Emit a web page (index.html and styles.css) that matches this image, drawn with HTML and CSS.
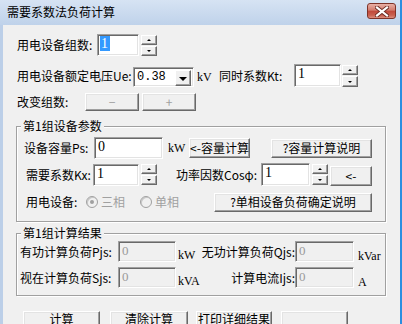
FILE: index.html
```html
<!DOCTYPE html>
<html lang="zh">
<head>
    <meta charset="UTF-8">
    <title>需要系数法负荷计算</title>
    <link rel="stylesheet" href="styles.css">
</head>
<body>
    <div class="window">
        <div class="titlebar">
            <span class="title">需要系数法负荷计算</span>
            <span class="close-btn">
                <svg width="14" height="11" viewBox="0 0 14 11">
                    <path d="M2 1.5 L12 9.5 M12 1.5 L2 9.5" stroke="#6b2a22" stroke-width="4" stroke-linecap="square"/>
                    <path d="M2 1.5 L12 9.5 M12 1.5 L2 9.5" stroke="#fff" stroke-width="2.2" stroke-linecap="square"/>
                </svg>
            </span>
        </div>

        <div class="client">
            <!-- group count -->
            <div class="row row-1">
                <span class="lbl w-groups">用电设备组数:</span>
                <span class="edit w42"><span class="picked">1</span></span>
                <span class="spin"><span class="spin-up"></span><span class="spin-down"></span></span>
            </div>

            <!-- voltage and Kt -->
            <div class="row row-2">
                <span class="lbl w-ue">用电设备额定电压Ue:</span>
                <span class="combo">
                    <span class="combo-text">0.38</span>
                    <span class="combo-btn"></span>
                </span>
                <span class="unit w-kv">kV</span>
                <span class="lbl w-kt">同时系数Kt:</span>
                <span class="edit w47 tall"><span class="val">1</span></span>
                <span class="spin spin-tall"><span class="spin-up"></span><span class="spin-down"></span></span>
            </div>

            <div class="row row-3">
                <span class="lbl w-change">改变组数:</span>
                <span class="btn btn-pm off">−</span>
                <span class="btn btn-pm off">+</span>
            </div>

            <fieldset class="group group-params">
                <legend>第1组设备参数</legend>
                <div class="row row-a">
                    <span class="lbl w-ps">设备容量Ps:</span>
                    <span class="edit w69"><span class="val">0</span></span>
                    <span class="unit w-kw">kW</span>
                    <span class="btn btn-calc">&lt;-容量计算</span>
                    <span class="btn btn-help">?容量计算说明</span>
                </div>
                <div class="row row-b">
                    <span class="lbl w-kx">需要系数Kx:</span>
                    <span class="edit w46"><span class="val">1</span></span>
                    <span class="spin"><span class="spin-up"></span><span class="spin-down"></span></span>
                    <span class="lbl w-cos">功率因数Cosφ:</span>
                    <span class="edit w49 tall"><span class="val">1</span></span>
                    <span class="spin"><span class="spin-up"></span><span class="spin-down"></span></span>
                    <span class="btn btn-arrow">&lt;-</span>
                </div>
                <div class="row row-c">
                    <span class="lbl w-dev">用电设备:</span>
                    <span class="radio on"></span><span class="radio-lbl">三相</span>
                    <span class="radio radio-2"></span><span class="radio-lbl">单相</span>
                    <span class="btn btn-single">?单相设备负荷确定说明</span>
                </div>
            </fieldset>

            <fieldset class="group group-result">
                <legend>第1组计算结果</legend>
                <div class="row row-d">
                    <span class="lbl w-res">有功计算负荷Pjs:</span>
                    <span class="edit off w58"><span class="val">0</span></span>
                    <span class="unit w-u1">kW</span>
                    <span class="lbl w-res2">无功计算负荷Qjs:</span>
                    <span class="edit off w59"><span class="val">0</span></span>
                    <span class="unit w-u2">kVar</span>
                </div>
                <div class="row row-e">
                    <span class="lbl w-res">视在计算负荷Sjs:</span>
                    <span class="edit off w58"><span class="val">0</span></span>
                    <span class="unit w-u1">kVA</span>
                    <span class="lbl w-res2">计算电流Ijs:</span>
                    <span class="edit off w59"><span class="val">0</span></span>
                    <span class="unit w-u2">A</span>
                </div>
            </fieldset>

            <div class="row row-bottom">
                <span class="btn btn-b1">计算</span>
                <span class="btn btn-b2">清除计算</span>
                <span class="btn btn-b3">打印详细结果</span>
                <span class="btn btn-b4"></span>
            </div>
        </div>
    </div>
</body>
</html>
```

FILE: styles.css
```css
body {
    margin: 0;
    width: 402px;
    height: 324px;
    overflow: hidden;
    font-family: "Noto Sans CJK SC", "Noto Sans", sans-serif;
    font-size: 12px;
    color: #000;
    background: #f0f0f0;
}
.window {
    height: 324px;
    border-left: 3px solid #bccfe8;
    border-right: 2px solid #2b8fe0;
    background: #f0f0f0;
}
.titlebar {
    height: 25px;
    margin-left: -3px;
    padding-left: 7px;
    display: flex;
    align-items: center;
    justify-content: space-between;
    background: linear-gradient(#d6e3f3, #bfd2ea);
}
.title {
    font-size: 12px;
    line-height: 14px;
    margin-top: -1px;
}
.close-btn {
    width: 29px;
    height: 16px;
    margin-right: 4px;
    margin-top: -3px;
    box-sizing: border-box;
    border: 1px solid #7e3328;
    border-radius: 3px;
    background: linear-gradient(#e8b0a6, #d27a6c 45%, #c0483a 50%, #c9604f 80%, #dc8e7f);
    display: flex;
    align-items: center;
    justify-content: center;
}
.row {
    display: flex;
    align-items: center;
}
.lbl {
    white-space: nowrap;
    line-height: 14px;
    flex: none;
}
.unit {
    font-family: "Liberation Serif", serif;
    font-size: 12px;
    flex: none;
}

/* edits */
.edit {
    box-sizing: border-box;
    height: 22px;
    flex: none;
    background: #fff;
    border: 1px solid;
    border-color: #a0a0a0 #fff #fff #a0a0a0;
    box-shadow: inset 1px 1px 0 #696969, inset -1px -1px 0 #e3e3e3;
    padding: 2px 0 0 3px;
    font-family: "Liberation Serif", serif;
    font-size: 14px;
    line-height: 14px;
}
.edit.tall {
    height: 23px;
}
.edit.off {
    background: #f0f0f0;
    height: 21px;
    color: #9a9a9a;
    font-size: 13px;
}
.picked {
    background: #3399ff;
    color: #fff;
    padding: 0 2px 0 1px;
    margin-left: -1px;
}
.w42 { width: 42px; }
.w46 { width: 46px; }
.w47 { width: 47px; }
.w49 { width: 49px; }
.w58 { width: 58px; }
.w59 { width: 59px; }
.w69 { width: 69px; }

/* spin buttons */
.spin {
    display: flex;
    flex-direction: column;
    gap: 1px;
    margin-left: 2px;
    flex: none;
}
.spin-up,
.spin-down {
    box-sizing: border-box;
    width: 16px;
    height: 10px;
    background: #f0f0f0;
    border: 1px solid;
    border-color: #fff #696969 #696969 #fff;
    box-shadow: inset -1px -1px 0 #a0a0a0;
    display: flex;
    align-items: center;
    justify-content: center;
}
.spin-up::after,
.spin-down::after {
    content: "";
    border-left: 2px solid transparent;
    border-right: 2px solid transparent;
}
.spin-up::after {
    border-bottom: 2px solid #000;
}
.spin-down::after {
    border-top: 2px solid #000;
}
.spin-tall .spin-down {
    height: 11px;
}

/* buttons */
.btn {
    box-sizing: border-box;
    flex: none;
    background: #f0f0f0;
    border: 1px solid;
    border-color: #fff #696969 #696969 #fff;
    box-shadow: inset -1px -1px 0 #a0a0a0, inset 1px 1px 0 #e3e3e3;
    display: flex;
    align-items: center;
    justify-content: center;
    white-space: nowrap;
    line-height: 14px;
}
.btn.off {
    color: #a0a0a0;
}

/* row 1 */
.row-1 {
    margin-top: 9px;
    height: 22px;
    padding-left: 14px;
}
.w-groups { width: 80px; }

/* row 2 */
.row-2 {
    margin-top: 8px;
    height: 23px;
    padding-left: 14px;
}
.w-ue { width: 116px; }
.combo {
    box-sizing: border-box;
    width: 61px;
    height: 20px;
    align-self: flex-end;
    flex: none;
    display: flex;
    background: #fff;
    border: 1px solid;
    border-color: #a0a0a0 #fff #fff #a0a0a0;
    box-shadow: inset 1px 1px 0 #696969, inset -1px -1px 0 #e3e3e3;
    padding: 2px;
}
.combo-text {
    flex: 1;
    font-family: "Liberation Mono", monospace;
    font-size: 12px;
    line-height: 15px;
    padding-left: 1px;
}
.combo-btn {
    box-sizing: border-box;
    width: 16px;
    height: 16px;
    background: #f0f0f0;
    border: 1px solid;
    border-color: #fff #696969 #696969 #fff;
    box-shadow: inset -1px -1px 0 #a0a0a0;
    display: flex;
    align-items: center;
    justify-content: center;
}
.combo-btn::after {
    content: "";
    border-left: 4px solid transparent;
    border-right: 4px solid transparent;
    border-top: 4px solid #000;
    margin-top: 1px;
}
.w-kv {
    width: 22px;
    padding-left: 3px;
    align-self: flex-end;
    margin-bottom: 2px;
}
.w-kt { width: 75px; }
.spin-tall {
    margin-left: 1px;
    align-self: flex-end;
}

/* row 3 */
.row-3 {
    margin-top: 6px;
    height: 18px;
    padding-left: 14px;
    gap: 3px;
}
.w-change {
    width: 65px;
}
.btn-pm {
    width: 54px;
    height: 18px;
}

/* group boxes */
.group {
    box-sizing: border-box;
    width: 370px;
    margin: 8px 0 0 13px;
    min-inline-size: 0;
    border: 1px solid #a0a0a0;
    box-shadow: inset 1px 1px 0 #fff, 1px 1px 0 #fff;
    padding: 4px 0 9px 0;
}
.group legend {
    font-size: 12px;
    line-height: 14px;
    padding: 0 2px;
    margin-left: 4px;
    background: #f0f0f0;
}
.row-a {
    height: 22px;
    padding-left: 7px;
}
.w-ps { width: 70px; }
.w-kw {
    width: 21px;
    padding-left: 5px;
}
.btn-calc {
    width: 61px;
    height: 20px;
}
.btn-help {
    width: 101px;
    height: 19px;
    margin-left: 21px;
}
.row-b {
    margin-top: 4px;
    height: 23px;
    padding-left: 9px;
}
.w-kx { width: 67px; }
.w-cos {
    width: 85px;
    margin-left: 19px;
}
.btn-arrow {
    width: 42px;
    height: 20px;
    margin-left: 2px;
    align-self: flex-end;
}
.row-c {
    margin-top: 6px;
    height: 20px;
    padding-left: 9px;
}
.w-dev { width: 60px; }
.radio {
    box-sizing: border-box;
    width: 12px;
    height: 12px;
    border-radius: 50%;
    border: 1px solid #a0a0a0;
    background: #f0f0f0;
    box-shadow: inset 1px 1px 0 #c8c8c8;
    display: flex;
    align-items: center;
    justify-content: center;
    flex: none;
}
.radio.on::after {
    content: "";
    width: 4px;
    height: 4px;
    border-radius: 50%;
    background: #a0a0a0;
}
.radio-2 {
    margin-left: 15px;
}
.radio-lbl {
    color: #a0a0a0;
    margin-left: 3px;
    line-height: 14px;
    width: 24px;
    white-space: nowrap;
}
.btn-single {
    width: 158px;
    height: 19px;
    margin-left: 35px;
}

.group-result {
    margin-top: 4px;
    padding: 1px 0 7px 0;
}
.row-d,
.row-e {
    height: 21px;
    padding-left: 3px;
}
.row-e {
    margin-top: 5px;
}
.w-res { width: 98px; }
.w-u1 {
    width: 21px;
    padding-left: 2px;
    align-self: flex-end;
    margin-bottom: -1px;
}
.w-res2 {
    width: 96px;
    text-align: right;
}
.w-u2 {
    padding-left: 4px;
    align-self: flex-end;
    margin-bottom: -2px;
}

/* bottom buttons, cut by the window edge */
.row-bottom {
    margin-top: 15px;
    height: 24px;
    align-items: flex-start;
}
.row-bottom .btn {
    height: 24px;
    align-items: flex-start;
    padding-top: 0;
}
.btn-b1 {
    width: 77px;
    margin-left: 20px;
}
.btn-b2 {
    width: 78px;
    margin-left: 10px;
}
.btn-b3 {
    width: 76px;
    margin-left: 8px;
}
.btn-b4 {
    width: 67px;
    margin-left: 9px;
}
```
